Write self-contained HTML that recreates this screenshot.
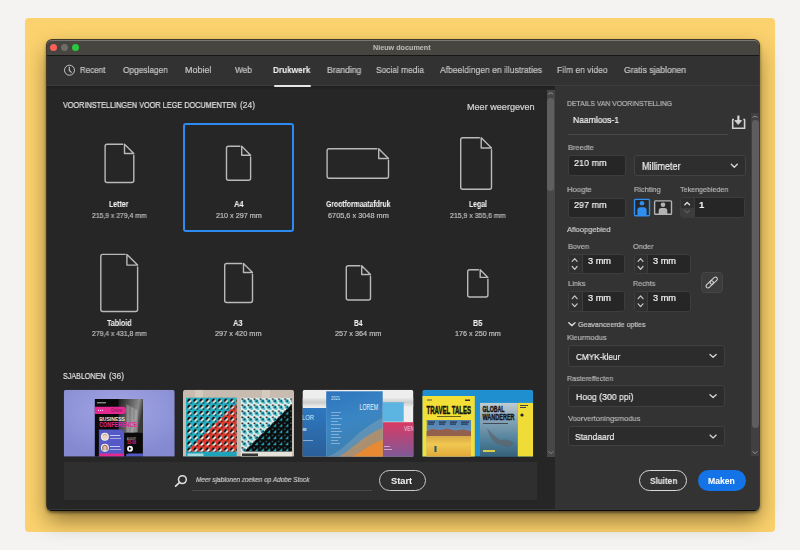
<!DOCTYPE html>
<html><head><meta charset="utf-8"><style>
html,body{margin:0;padding:0;width:800px;height:550px;overflow:hidden;background:#f4f3f1;font-family:'Liberation Sans', sans-serif;}
.a{position:absolute;box-sizing:border-box;}
.t{position:absolute;white-space:pre;line-height:1;transform-origin:0 0;font-family:'Liberation Sans', sans-serif;will-change:transform;}
</style></head><body>
<!-- yellow card -->
<div class="a" style="left:25px;top:18px;width:750px;height:514px;background:#fbd26d;border-radius:4px;"></div>
<!-- window shadow -->
<div class="a" style="left:46px;top:39px;width:714px;height:472px;border-radius:6px;box-shadow:0 2px 3px rgba(0,0,0,0.45), 0 10px 22px -2px rgba(40,25,0,0.55);"></div>
<!-- window -->
<div class="a" style="left:46px;top:39px;width:714px;height:472px;border-radius:6px;overflow:hidden;background:rgba(22,22,24,0.82);">
  <div class="a" style="left:1px;top:1px;width:712px;height:15px;background:#47453f;border-top:1px solid #797773;border-radius:5px 5px 0 0;"></div>
  <div class="a" style="left:1px;top:16px;width:712px;height:1px;background:#161616;"></div>
  <div class="a" style="left:1px;top:17px;width:712px;height:29px;background:#323232;"></div>
  <div class="a" style="left:1px;top:46px;width:712px;height:1px;background:#3c3c3c;"></div>
  <div class="a" style="left:1px;top:47px;width:508px;height:423px;background:#262626;"></div><div class="a" style="left:1px;top:47px;width:508px;height:3px;background:linear-gradient(#1f1f1f,#242424);"></div>
  <div class="a" style="left:509px;top:47px;width:204px;height:423px;background:#333333;"></div>
  <div class="a" style="left:1px;top:470px;width:712px;height:1px;background:#363636;"></div>
  <div class="a" style="left:0;top:471px;width:714px;height:1px;background:#0a0a0a;"></div>
</div>
<!-- traffic lights -->
<div class="a" style="left:50.1px;top:44px;width:7px;height:7px;border-radius:50%;background:#fe5f57;"></div>
<div class="a" style="left:60.9px;top:44px;width:7px;height:7px;border-radius:50%;background:#6e6d6a;"></div>
<div class="a" style="left:71.5px;top:44px;width:7px;height:7px;border-radius:50%;background:#2ac840;"></div>
<!-- clock icon -->
<svg class="a" style="left:60px;top:60px" width="20" height="20" viewBox="0 0 20 20"><circle cx="9.5" cy="10.2" r="5" fill="none" stroke="#c6c6c6" stroke-width="1"/><path d="M9.3 6.8 V10.4 L11.6 12.6" fill="none" stroke="#c6c6c6" stroke-width="1.1"/></svg>
<!-- tab underline -->
<div class="a" style="left:273.75px;top:84.8px;width:36.75px;height:2px;background:#e6e6e6;border-radius:1px;"></div>
<!-- left scrollbar -->
<div class="a" style="left:547px;top:89.5px;width:7.7px;height:367px;background:#474747;"></div>
<div class="a" style="left:547.4px;top:97.5px;width:6.8px;height:93px;background:#5f5f5f;border-radius:3.4px;"></div>
<!-- selection box -->
<div class="a" style="left:183px;top:122.5px;width:111.2px;height:109.5px;border:2px solid #2c8af0;border-radius:3px;"></div>
<!-- doc icons -->
<svg class="a" style="left:0;top:0" width="800" height="550" viewBox="0 0 800 550" id="icons"><path d="M133.80,155.30 L133.80,180.50 Q133.80,182.50 131.80,182.50 L107.10,182.50 Q105.10,182.50 105.10,180.50 L105.10,146.20 Q105.10,144.20 107.10,144.20 L122.70,144.20" fill="none" stroke="#b9b9b9" stroke-width="1.4" stroke-linecap="round"/><path d="M124.50,144.20 L133.80,153.50 L124.50,153.50 Z" fill="none" stroke="#b9b9b9" stroke-width="1.4" stroke-linejoin="round"/><path d="M250.60,157.00 L250.60,178.30 Q250.60,180.30 248.60,180.30 L228.50,180.30 Q226.50,180.30 226.50,178.30 L226.50,148.30 Q226.50,146.30 228.50,146.30 L239.90,146.30" fill="none" stroke="#b9b9b9" stroke-width="1.4" stroke-linecap="round"/><path d="M241.70,146.30 L250.60,155.20 L241.70,155.20 Z" fill="none" stroke="#b9b9b9" stroke-width="1.4" stroke-linejoin="round"/><path d="M388.50,160.30 L388.50,176.30 Q388.50,178.30 386.50,178.30 L329.10,178.30 Q327.10,178.30 327.10,176.30 L327.10,150.70 Q327.10,148.70 329.10,148.70 L376.90,148.70" fill="none" stroke="#b9b9b9" stroke-width="1.4" stroke-linecap="round"/><path d="M378.70,148.70 L388.50,158.50 L378.70,158.50 Z" fill="none" stroke="#b9b9b9" stroke-width="1.4" stroke-linejoin="round"/><path d="M491.50,149.80 L491.50,187.30 Q491.50,189.30 489.50,189.30 L462.70,189.30 Q460.70,189.30 460.70,187.30 L460.70,139.70 Q460.70,137.70 462.70,137.70 L479.40,137.70" fill="none" stroke="#b9b9b9" stroke-width="1.4" stroke-linecap="round"/><path d="M481.20,137.70 L491.50,148.00 L481.20,148.00 Z" fill="none" stroke="#b9b9b9" stroke-width="1.4" stroke-linejoin="round"/><path d="M137.60,266.90 L137.60,309.55 Q137.60,311.55 135.60,311.55 L102.80,311.55 Q100.80,311.55 100.80,309.55 L100.80,256.40 Q100.80,254.40 102.80,254.40 L125.10,254.40" fill="none" stroke="#b9b9b9" stroke-width="1.4" stroke-linecap="round"/><path d="M126.90,254.40 L137.60,265.10 L126.90,265.10 Z" fill="none" stroke="#b9b9b9" stroke-width="1.4" stroke-linejoin="round"/><path d="M252.50,274.30 L252.50,300.50 Q252.50,302.50 250.50,302.50 L226.70,302.50 Q224.70,302.50 224.70,300.50 L224.70,265.50 Q224.70,263.50 226.70,263.50 L241.70,263.50" fill="none" stroke="#b9b9b9" stroke-width="1.4" stroke-linecap="round"/><path d="M243.50,263.50 L252.50,272.50 L243.50,272.50 Z" fill="none" stroke="#b9b9b9" stroke-width="1.4" stroke-linejoin="round"/><path d="M370.50,276.30 L370.50,298.00 Q370.50,300.00 368.50,300.00 L348.30,300.00 Q346.30,300.00 346.30,298.00 L346.30,267.70 Q346.30,265.70 348.30,265.70 L359.90,265.70" fill="none" stroke="#b9b9b9" stroke-width="1.4" stroke-linecap="round"/><path d="M361.70,265.70 L370.50,274.50 L361.70,274.50 Z" fill="none" stroke="#b9b9b9" stroke-width="1.4" stroke-linejoin="round"/><path d="M487.90,279.20 L487.90,295.00 Q487.90,297.00 485.90,297.00 L469.70,297.00 Q467.70,297.00 467.70,295.00 L467.70,271.70 Q467.70,269.70 469.70,269.70 L478.40,269.70" fill="none" stroke="#b9b9b9" stroke-width="1.4" stroke-linecap="round"/><path d="M480.20,269.70 L487.90,277.40 L480.20,277.40 Z" fill="none" stroke="#b9b9b9" stroke-width="1.4" stroke-linejoin="round"/></svg>
<svg class="a" style="left:0;top:0" width="800" height="550" viewBox="0 0 800 550"><defs>
<clipPath id="c1"><path d="M63.75,456.4 V392.3 Q63.75,389.8 66.25,389.8 H172.2 Q174.7,389.8 174.7,392.3 V456.4 Z"/></clipPath>
<clipPath id="c2"><path d="M183,456.4 V392.3 Q183,389.8 185.5,389.8 H291.5 Q294,389.8 294,392.3 V456.4 Z"/></clipPath>
<clipPath id="c3"><path d="M302.5,456.4 V392.3 Q302.5,389.8 305,389.8 H410.9 Q413.4,389.8 413.4,392.3 V456.4 Z"/></clipPath>
<clipPath id="c4"><path d="M422.3,456.4 V392.3 Q422.3,389.8 424.8,389.8 H530.7 Q533.2,389.8 533.2,392.3 V456.4 Z"/></clipPath>
<radialGradient id="g1" cx="0.5" cy="0.3" r="0.7"><stop offset="0" stop-color="#a3a7e6"/><stop offset="1" stop-color="#8489d0"/></radialGradient>
<linearGradient id="bld" x1="0" y1="0" x2="1" y2="0.3"><stop offset="0" stop-color="#1e1e1e"/><stop offset="0.45" stop-color="#5a5a5a"/><stop offset="0.8" stop-color="#8a8a8a"/><stop offset="1" stop-color="#3a3a3a"/></linearGradient>
<pattern id="pt1" width="6.1" height="6.1" patternUnits="userSpaceOnUse" x="186.3" y="397.9"><rect width="6.1" height="6.1" fill="#22b2c6"/><circle cx="3" cy="3" r="2.1" fill="#f2f2ee"/><path d="M1.5,4.5 A2.1,2.1 0 0 1 4.5,1.5 Z" fill="#0c0c0c"/><path d="M3.4,5.6 L5.6,3.4 L5.6,5.6Z" fill="#0c0c0c"/></pattern>
<pattern id="pt2" width="6.1" height="6.1" patternUnits="userSpaceOnUse" x="186.3" y="397.9"><rect width="6.1" height="6.1" fill="#e8392c"/><circle cx="3" cy="3" r="2.1" fill="#f2f2ee"/><path d="M1.5,4.5 A2.1,2.1 0 0 1 4.5,1.5 Z" fill="#0c0c0c"/><path d="M3.4,5.6 L5.6,3.4 L5.6,5.6Z" fill="#0c0c0c"/></pattern>
<pattern id="pt3" width="6.1" height="6.1" patternUnits="userSpaceOnUse" x="241.1" y="397.9"><rect width="6.1" height="6.1" fill="#e9f0ec"/><rect x="0.4" y="0.4" width="1.7" height="1.5" fill="#111"/><circle cx="3.1" cy="3.1" r="1.9" fill="#1fa9be"/><path d="M2.2,4 L4,2.2 L4.6,3.6Z" fill="#111"/><path d="M3.2,5.8 L5.8,3.2 L5.8,5.8Z" fill="#22b0c4"/></pattern>
<pattern id="pt4" width="6.1" height="6.1" patternUnits="userSpaceOnUse" x="241.1" y="397.9"><rect width="6.1" height="6.1" fill="#0b0b0b"/><path d="M1.4,4.6 L4.6,1.4 L4.6,4.6Z" fill="#1fa9be"/><rect x="0.3" y="0.3" width="1.3" height="1.3" fill="#3a8a96"/></pattern>
<linearGradient id="bl3" x1="0" y1="0" x2="0.3" y2="1"><stop offset="0" stop-color="#2f74bd"/><stop offset="0.5" stop-color="#3a86c4"/><stop offset="1" stop-color="#3f7fae"/></linearGradient>
<linearGradient id="or3" x1="0" y1="0" x2="1" y2="0"><stop offset="0" stop-color="#e8842a" stop-opacity="0"/><stop offset="1" stop-color="#e8842a"/></linearGradient>
<linearGradient id="pk3" x1="0" y1="0" x2="0" y2="1"><stop offset="0" stop-color="#d83a63"/><stop offset="1" stop-color="#7d5a9a"/></linearGradient>
<linearGradient id="sky4" x1="0" y1="0" x2="0" y2="1"><stop offset="0" stop-color="#4f7fb0"/><stop offset="1" stop-color="#8ab0cc"/></linearGradient>
<linearGradient id="des4" x1="0" y1="0" x2="0" y2="1"><stop offset="0" stop-color="#d8a848"/><stop offset="0.4" stop-color="#f0c850"/><stop offset="1" stop-color="#e0a838"/></linearGradient>
<linearGradient id="sea4" x1="0" y1="0" x2="0" y2="1"><stop offset="0" stop-color="#c0ccd2"/><stop offset="0.3" stop-color="#8aa6b8"/><stop offset="0.7" stop-color="#4f7f9a"/><stop offset="1" stop-color="#35607a"/></linearGradient>
<linearGradient id="gr3" x1="0" y1="0" x2="0" y2="1"><stop offset="0" stop-color="#e8e8e8"/><stop offset="0.5" stop-color="#cdcdcd"/><stop offset="1" stop-color="#ececec"/></linearGradient><linearGradient id="bl3b" x1="0" y1="0" x2="0" y2="1"><stop offset="0" stop-color="#2e78bf"/><stop offset="1" stop-color="#2a5f9a"/></linearGradient></defs><g clip-path="url(#c1)"><rect x="63.75" y="389.8" width="111" height="67" fill="url(#g1)"/><rect x="94.8" y="399" width="48.1" height="58" fill="#0a0a0a"/><rect x="118.6" y="399" width="24.3" height="33.8" fill="url(#bld)"/><path d="M126,404 L138,410 L138,432 L126,432Z" fill="#b0b0b0" opacity="0.35"/><path d="M128,406 V432 M132,408 V432 M136,410 V432" stroke="#d8d8d8" stroke-width="0.6" opacity="0.6"/><rect x="97" y="402.3" width="9" height="1" fill="#bbb"/><path d="M94.8,406.8 H123 Q126.1,406.8 126.1,410.3 Q126.1,413.9 123,413.9 H94.8Z" fill="#e42a92"/><rect x="98" y="409.8" width="1" height="1" fill="#fff"/><rect x="100" y="409.8" width="1" height="1" fill="#fff"/><rect x="102" y="409.8" width="1" height="1" fill="#fff"/><text x="111" y="412.4" font-family="Liberation Sans" font-size="5" textLength="11" lengthAdjust="spacingAndGlyphs" fill="#7a1048">Online</text><text x="99.2" y="420.9" font-family="Liberation Sans" font-weight="700" font-size="5.6" textLength="25.8" lengthAdjust="spacingAndGlyphs" fill="#ececec">BUSINESS</text><text x="99.2" y="427.4" font-family="Liberation Sans" font-weight="700" font-size="6.4" textLength="37.8" lengthAdjust="spacingAndGlyphs" fill="#e0289a">CONFERENCE</text><path d="M98.9,456.4 V429.4 H120 Q124.1,429.4 124.1,433.5 V456.4Z" fill="#5459c6"/><circle cx="104.9" cy="436.8" r="4" fill="#f2ede8"/><circle cx="104.9" cy="436.8" r="2.9" fill="#e8d4c4"/><path d="M102.6,435.5 Q104.9,432.8 107.2,435.5" stroke="#c8a080" stroke-width="1" fill="none"/><circle cx="104.9" cy="447.7" r="4" fill="#f2ede8"/><circle cx="104.9" cy="447.7" r="2.9" fill="#d8c0ac"/><path d="M102.8,450.5 V446.5 Q104.9,443.6 107,446.5 V450.5" stroke="#8a6040" stroke-width="0.9" fill="none"/><rect x="110" y="435" width="10" height="1" fill="#c8c8f0"/><rect x="110" y="438" width="11" height="1" fill="#a8a8e0"/><rect x="110" y="446" width="10" height="1" fill="#c8c8f0"/><rect x="110" y="449" width="11" height="1" fill="#a8a8e0"/><rect x="98.9" y="453.6" width="25.2" height="3" fill="#e42a92"/><text x="127" y="439.8" font-family="Liberation Sans" font-size="2.8" textLength="9" lengthAdjust="spacingAndGlyphs" fill="#ddd">AUGUST</text><text x="127" y="444.2" font-family="Liberation Sans" font-weight="700" font-size="4.8" textLength="9" lengthAdjust="spacingAndGlyphs" fill="#e42a92">15-16</text><circle cx="130" cy="448.8" r="3" fill="#f0f0f0"/><path d="M129,447.3 L131.5,448.8 L129,450.3Z" fill="#111"/><path d="M126,456.4 V455.6 Q126,453.6 128,453.6 H142.9 V456.4Z" fill="#5459c6"/></g><g clip-path="url(#c2)"><rect x="183" y="389.8" width="111" height="67" fill="#c8bcb0"/><rect x="195" y="389.8" width="8" height="8" fill="#ddd3c8" opacity="0.6"/><rect x="262" y="389.8" width="8" height="8" fill="#ddd3c8" opacity="0.6"/><rect x="186" y="397.7" width="50.7" height="54" fill="url(#pt1)"/><path d="M236.7,403.5 L236.7,451.7 L186,451.7 Z" fill="url(#pt2)"/><rect x="186" y="451.7" width="50.7" height="5" fill="#1fa3bb"/><rect x="240.7" y="397.7" width="51.3" height="54" fill="url(#pt3)"/><path d="M292,404 L292,451.7 L244,451.7 Z" fill="url(#pt4)"/><rect x="240.7" y="451.7" width="51.3" height="5" fill="#e6e3da"/><rect x="242" y="453.5" width="16" height="2.5" fill="#333"/><rect x="187.5" y="453.5" width="16" height="2.5" fill="#e0f0f0" opacity="0.7"/></g><g clip-path="url(#c3)"><rect x="302.5" y="389.8" width="111" height="67" fill="#eeeeee"/><rect x="302.5" y="398" width="111" height="9" fill="url(#gr3)"/><rect x="302.5" y="408" width="24" height="49" fill="url(#bl3b)"/><text x="302" y="420" font-family="Liberation Sans" font-size="7" textLength="12" lengthAdjust="spacingAndGlyphs" fill="#d8e6f4">LOR</text><rect x="302.5" y="428" width="4" height="3" fill="#cfe0f0" opacity="0.7"/><rect x="303" y="440" width="10" height="1" fill="#cfe0f0" opacity="0.6"/><rect x="382.7" y="402.2" width="21" height="19.5" fill="#5cb4e0"/><rect x="382.7" y="422.2" width="31" height="35" fill="url(#pk3)"/><text x="404" y="430.5" font-family="Liberation Sans" font-size="7" textLength="10" lengthAdjust="spacingAndGlyphs" fill="#f4d8e4">VEN</text><rect x="384" y="446" width="6" height="1" fill="#e8d0e0" opacity="0.7"/><rect x="384" y="449" width="8" height="1" fill="#e8d0e0" opacity="0.7"/><rect x="326.2" y="391.3" width="56.5" height="66" fill="url(#bl3)"/><path d="M326.2,457 C345,452 355,430 382.7,418 L382.7,457Z" fill="#9db0b8" opacity="0.35"/><path d="M338,457 C352,450 362,436 382.7,428 L382.7,457Z" fill="#e8903a" opacity="0.55"/><path d="M352,457 C362,452 370,444 382.7,440 L382.7,457Z" fill="#ee8a2a" opacity="0.9"/><text x="331" y="400" font-family="Liberation Sans" font-size="5.5" textLength="9" lengthAdjust="spacingAndGlyphs" fill="#dbe8f6">2021</text><text x="359.5" y="409.5" font-family="Liberation Sans" font-size="9" textLength="18.5" lengthAdjust="spacingAndGlyphs" fill="#e8f0f8">LOREM</text><g fill="#d0e0f0" opacity="0.55"><rect x="331" y="412" width="10" height="0.9"/><rect x="331" y="415" width="8" height="0.9"/><rect x="331" y="418" width="11" height="0.9"/><rect x="331" y="421" width="7" height="0.9"/><rect x="331" y="424" width="10" height="0.9"/><rect x="331" y="428" width="9" height="0.9"/><rect x="331" y="431" width="11" height="0.9"/><rect x="331" y="434" width="8" height="0.9"/><rect x="331" y="437" width="10" height="0.9"/><rect x="331" y="440" width="7" height="0.9"/><rect x="331" y="443" width="9" height="0.9"/></g></g><g clip-path="url(#c4)"><rect x="422.3" y="389.8" width="111" height="67" fill="#1f8fd0"/><rect x="422.3" y="396" width="52.5" height="61" fill="#f3df36"/><rect x="427" y="399.5" width="5" height="1" fill="#555"/><rect x="465" y="399.5" width="5" height="1.5" fill="#333"/><text x="426.6" y="413.6" font-family="Liberation Sans" font-weight="700" font-size="11" textLength="44.4" lengthAdjust="spacingAndGlyphs" fill="#141414" stroke="#141414" stroke-width="0.5">TRAVEL TALES</text><rect x="437" y="416" width="24" height="1" fill="#6a6020"/><rect x="426.7" y="420" width="44.3" height="37" fill="url(#sky4)"/><g fill="#1a2030" opacity="0.8"><rect x="428" y="421.5" width="7" height="1.2"/><rect x="428" y="423.5" width="6" height="1.2"/><rect x="439" y="421.5" width="7" height="1.2"/><rect x="439" y="423.5" width="6" height="1.2"/><rect x="450" y="421.5" width="7" height="1.2"/><rect x="450" y="423.5" width="6" height="1.2"/><rect x="461" y="421.5" width="8" height="1.2"/><rect x="461" y="423.5" width="7" height="1.2"/></g><path d="M426.7,431 L432,429 L440,430 L447,428.5 L455,430.5 L463,429.5 L471,431 L471,437 L426.7,437Z" fill="#94604e"/><rect x="426.7" y="436" width="44.3" height="21" fill="url(#des4)"/><rect x="434.5" y="446" width="2" height="6" fill="#1d5a70"/><rect x="480" y="402.9" width="37.8" height="54" fill="url(#sea4)"/><text x="482.5" y="411.8" font-family="Liberation Sans" font-weight="700" font-size="8.5" textLength="22" lengthAdjust="spacingAndGlyphs" fill="#141414" stroke="#141414" stroke-width="0.4">GLOBAL</text><text x="482.5" y="420.3" font-family="Liberation Sans" font-weight="700" font-size="8.5" textLength="32" lengthAdjust="spacingAndGlyphs" fill="#141414" stroke="#141414" stroke-width="0.4">WANDERER</text><rect x="483" y="423" width="25" height="0.8" fill="#334"/><path d="M487,428 Q494,436 500,440 Q508,438 514,443 L510,447 Q500,446 494,442 Q489,436 487,428Z" fill="#5e6468" opacity="0.7"/><rect x="483" y="450" width="12" height="2" fill="#e8d840" opacity="0.9"/><rect x="517.8" y="402.9" width="15.4" height="54" fill="#f0dc36"/><rect x="520" y="405" width="8" height="1" fill="#444"/><rect x="520" y="407" width="6" height="1" fill="#444"/><circle cx="522" cy="415" r="1.6" fill="#222"/></g></svg>
<!-- search bar -->
<div class="a" style="left:64px;top:461.5px;width:473.3px;height:38.2px;background:#2f2f2f;"></div>
<div class="a" style="left:192.2px;top:489.5px;width:179.5px;height:1px;background:#4a4a4a;"></div>
<div class="a" style="left:378.75px;top:470px;width:47.25px;height:21px;border:1.6px solid #c8c8c8;border-radius:11px;"></div>
<!-- right panel -->
<div class="a" style="left:568.2px;top:134px;width:159.4px;height:1px;background:#474747;"></div>
<div class="a" style="left:568.2px;top:155.4px;width:57.6px;height:21.1px;background:#262626;border:1px solid #3d3d3d;border-radius:3px;"></div>
<div class="a" style="left:633.9px;top:155.4px;width:111.7px;height:21.1px;background:#2e2e2e;border:1px solid #424242;border-radius:3px;"></div>
<div class="a" style="left:568.2px;top:197.5px;width:57.6px;height:20px;background:#262626;border:1px solid #3d3d3d;border-radius:3px;"></div>
<!-- right scrollbar -->
<div class="a" style="left:751px;top:112.6px;width:8.2px;height:343.6px;background:#404040;"></div>
<div class="a" style="left:751.8px;top:120.3px;width:6.8px;height:307.3px;background:#5d5d5d;border-radius:3.4px;"></div>
<!-- buttons -->
<div class="a" style="left:639.3px;top:470.3px;width:47.9px;height:20.6px;border:1.8px solid #d8d8d8;border-radius:11px;"></div>
<div class="a" style="left:697.9px;top:470.3px;width:47.8px;height:20.6px;background:#1473e6;border-radius:11px;"></div>

<!-- artboards stepper -->
<div class="a" style="left:680.3px;top:197.4px;width:65.2px;height:20.2px;background:#262626;border:1px solid #3d3d3d;border-radius:3px;overflow:hidden;">
  <div class="a" style="left:0;top:0;width:13px;height:10px;background:#2f2f2f;"></div>
  <div class="a" style="left:0;top:10px;width:13px;height:10px;background:#3d3d3d;"></div>
  <div class="a" style="left:12.6px;top:0;width:1px;height:20px;background:#3d3d3d;"></div>
</div>
<!-- bleed inputs -->
<div class="a" style="left:568px;top:253.6px;width:57.4px;height:20.8px;background:#262626;border:1px solid #3d3d3d;border-radius:3px;overflow:hidden;"><div class="a" style="left:0;top:0;width:12.6px;height:21px;background:#2f2f2f;"></div><div class="a" style="left:12.6px;top:0;width:1px;height:21px;background:#3d3d3d;"></div></div>
<div class="a" style="left:633.9px;top:253.6px;width:57.4px;height:20.8px;background:#262626;border:1px solid #3d3d3d;border-radius:3px;overflow:hidden;"><div class="a" style="left:0;top:0;width:12.6px;height:21px;background:#2f2f2f;"></div><div class="a" style="left:12.6px;top:0;width:1px;height:21px;background:#3d3d3d;"></div></div>
<div class="a" style="left:568px;top:290.9px;width:57.4px;height:20.8px;background:#262626;border:1px solid #3d3d3d;border-radius:3px;overflow:hidden;"><div class="a" style="left:0;top:0;width:12.6px;height:21px;background:#2f2f2f;"></div><div class="a" style="left:12.6px;top:0;width:1px;height:21px;background:#3d3d3d;"></div></div>
<div class="a" style="left:633.9px;top:290.9px;width:57.4px;height:20.8px;background:#262626;border:1px solid #3d3d3d;border-radius:3px;overflow:hidden;"><div class="a" style="left:0;top:0;width:12.6px;height:21px;background:#2f2f2f;"></div><div class="a" style="left:12.6px;top:0;width:1px;height:21px;background:#3d3d3d;"></div></div>
<!-- link button -->
<div class="a" style="left:701px;top:272px;width:22px;height:21.3px;background:#3c3c3c;border:1px solid #464646;border-radius:3.5px;"></div>
<!-- dropdowns -->
<div class="a" style="left:567.9px;top:345.2px;width:156.8px;height:21.5px;background:#2c2c2c;border:1px solid #404040;border-radius:3px;"></div>
<div class="a" style="left:567.9px;top:385.3px;width:156.8px;height:21.4px;background:#2c2c2c;border:1px solid #404040;border-radius:3px;"></div>
<div class="a" style="left:567.9px;top:426.1px;width:156.8px;height:20.4px;background:#2c2c2c;border:1px solid #404040;border-radius:3px;"></div>
<!-- misc svg icons -->
<svg class="a" style="left:0;top:0" width="800" height="550" viewBox="0 0 800 550">
 <g fill="none" stroke-linecap="round" stroke-linejoin="round">
  <!-- millimeter chevron -->
  <path d="M731.3,164.3 L734.3,167.3 L737.3,164.3" stroke="#d8d8d8" stroke-width="1.35"/>
  <!-- dropdown chevrons -->
  <path d="M710,354.5 L713.1,357.3 L716.2,354.5" stroke="#d6d6d6" stroke-width="1.3"/>
  <path d="M710,394.8 L713.1,397.6 L716.2,394.8" stroke="#d6d6d6" stroke-width="1.3"/>
  <path d="M710,435.1 L713.1,437.9 L716.2,435.1" stroke="#d6d6d6" stroke-width="1.3"/>
  <!-- geavanceerde chevron -->
  <path d="M568.8,322.7 L571.9,325.6 L575,322.7" stroke="#d6d6d6" stroke-width="1.45"/>
  <!-- artboard stepper chevrons -->
  <path d="M684.8,204.8 L687.1,202.5 L689.6,204.8" stroke="#e0e0e0" stroke-width="1.3"/>
  <path d="M684.8,210.4 L687.1,212.8 L689.6,210.4" stroke="#5f5f5f" stroke-width="1.1"/>
  <!-- bleed stepper chevrons -->
  <path d="M572.2,261.4 L574.7,258.6 L577.1,261.4" stroke="#c8c8c8" stroke-width="1.2"/>
  <path d="M572.2,266.5 L574.7,269.3 L577.1,266.5" stroke="#c8c8c8" stroke-width="1.2"/>
  <path d="M638.1,261.4 L640.6,258.6 L643,261.4" stroke="#c8c8c8" stroke-width="1.2"/>
  <path d="M638.1,266.5 L640.6,269.3 L643,266.5" stroke="#c8c8c8" stroke-width="1.2"/>
  <path d="M572.2,298.7 L574.7,295.9 L577.1,298.7" stroke="#c8c8c8" stroke-width="1.2"/>
  <path d="M572.2,303.8 L574.7,306.6 L577.1,303.8" stroke="#c8c8c8" stroke-width="1.2"/>
  <path d="M638.1,298.7 L640.6,295.9 L643,298.7" stroke="#c8c8c8" stroke-width="1.2"/>
  <path d="M638.1,303.8 L640.6,306.6 L643,303.8" stroke="#c8c8c8" stroke-width="1.2"/>
  <!-- save icon -->
  <path d="M732.7,119.4 V128.2 H744.6 V119.4" stroke="#d2d2d2" stroke-width="1.6" stroke-linecap="butt" stroke-linejoin="miter"/>
  <path d="M732.2,119.4 H734 M745.1,119.4 H743.3" stroke="#d2d2d2" stroke-width="1.4" stroke-linecap="butt"/>
  <path d="M738.4,115.6 V121" stroke="#d6d6d6" stroke-width="2.2" stroke-linecap="butt"/>
  <path d="M735.2,120.6 H741.6 L738.4,124.2 Z" fill="#d6d6d6" stroke="#d6d6d6" stroke-width="0.9" stroke-linejoin="round"/>
  <!-- link icon -->
  <g transform="translate(711.7,282.5) rotate(-43)">
   <rect x="-7" y="-1.9" width="8.6" height="3.8" rx="1.9" stroke="#d4d4d4" stroke-width="1.05"/>
   <rect x="-1.6" y="-1.9" width="8.6" height="3.8" rx="1.9" stroke="#d4d4d4" stroke-width="1.05"/>
  </g>
  <!-- scrollbar chevrons -->
  <path d="M548.5,93.8 Q550.6,91.2 552.7,93.8" stroke="#9a9a9a" stroke-width="0.9"/>
  <path d="M548.6,451.6 L550.9,453.6 L553.2,451.6" stroke="#8a8a8a" stroke-width="0.9"/>
  <path d="M752.8,117.1 Q755,114.8 757.2,117.1" stroke="#a0a0a0" stroke-width="0.85"/>
  <path d="M752.8,451.6 L755,453.6 L757.2,451.6" stroke="#9a9a9a" stroke-width="0.9"/>
  <!-- search icon -->
  <circle cx="182.4" cy="479.6" r="3.9" stroke="#e0e0e0" stroke-width="1.5"/>
  <path d="M179.6,482.4 L175.6,486.2" stroke="#e0e0e0" stroke-width="1.7"/>
 </g>
 <!-- orientation icons -->
 <rect x="634.5" y="199.4" width="15" height="16.4" fill="#282828" stroke="#2e8ff0" stroke-width="1.4" rx="1"/>
 <circle cx="642" cy="203.3" r="2.3" fill="#2e8ff0"/>
 <path d="M637.4,215.8 V210.2 Q637.4,207.3 640.3,207.3 H643.7 Q646.6,207.3 646.6,210.2 V215.8Z" fill="#2e8ff0"/>
 <rect x="654.6" y="200.9" width="16.9" height="13.4" fill="#282828" stroke="#b4b4b4" stroke-width="1.4" rx="0.8"/>
 <circle cx="663" cy="204.8" r="2.3" fill="#b4b4b4"/>
 <path d="M658.7,214.3 V210.7 Q658.7,208 661.4,208 H664.6 Q667.3,208 667.3,210.7 V214.3Z" fill="#b4b4b4"/>
</svg>

<div class="t" style="left:373.13px;top:44.00px;font-size:7.0px;font-weight:700;color:#bdbcb8;transform:scaleX(1.0288);-webkit-text-stroke:0.05px #bdbcb8;">Nieuw document</div>
<div class="t" style="left:80.42px;top:66.00px;font-size:9px;font-weight:400;color:#c6c6c6;transform:scaleX(0.8875);-webkit-text-stroke:0.2px #c6c6c6;">Recent</div>
<div class="t" style="left:123.48px;top:66.00px;font-size:9px;font-weight:400;color:#c6c6c6;transform:scaleX(0.9248);-webkit-text-stroke:0.2px #c6c6c6;">Opgeslagen</div>
<div class="t" style="left:185.05px;top:66.00px;font-size:9px;font-weight:400;color:#c6c6c6;transform:scaleX(0.9947);-webkit-text-stroke:0.2px #c6c6c6;">Mobiel</div>
<div class="t" style="left:234.81px;top:66.00px;font-size:9px;font-weight:400;color:#c6c6c6;transform:scaleX(0.9243);-webkit-text-stroke:0.2px #c6c6c6;">Web</div>
<div class="t" style="left:272.80px;top:66.00px;font-size:9px;font-weight:700;color:#f2f2f2;transform:scaleX(0.9110);-webkit-text-stroke:0.05px #f2f2f2;">Drukwerk</div>
<div class="t" style="left:326.53px;top:66.00px;font-size:9px;font-weight:400;color:#c6c6c6;transform:scaleX(0.9508);-webkit-text-stroke:0.2px #c6c6c6;">Branding</div>
<div class="t" style="left:375.70px;top:66.00px;font-size:9px;font-weight:400;color:#c6c6c6;transform:scaleX(0.9297);-webkit-text-stroke:0.2px #c6c6c6;">Social media</div>
<div class="t" style="left:439.70px;top:66.00px;font-size:9px;font-weight:400;color:#c6c6c6;transform:scaleX(0.9487);-webkit-text-stroke:0.2px #c6c6c6;">Afbeeldingen en illustraties</div>
<div class="t" style="left:557.48px;top:66.00px;font-size:9px;font-weight:400;color:#c6c6c6;transform:scaleX(0.9454);-webkit-text-stroke:0.2px #c6c6c6;">Film en video</div>
<div class="t" style="left:623.68px;top:66.00px;font-size:9px;font-weight:400;color:#c6c6c6;transform:scaleX(0.9542);-webkit-text-stroke:0.2px #c6c6c6;">Gratis sjablonen</div>
<div class="t" style="left:63.02px;top:101.00px;font-size:8.4px;font-weight:400;color:#e2e2e2;transform:scaleX(0.8712);-webkit-text-stroke:0.2px #e2e2e2;">VOORINSTELLINGEN VOOR LEGE DOCUMENTEN</div>
<div class="t" style="left:239.59px;top:101.00px;font-size:8.4px;font-weight:400;color:#d4d4d4;transform:scaleX(1.0022);-webkit-text-stroke:0.2px #d4d4d4;">(24)</div>
<div class="t" style="left:467.21px;top:103.00px;font-size:8.6px;font-weight:400;color:#d2d2d2;transform:scaleX(1.0572);-webkit-text-stroke:0.2px #d2d2d2;">Meer weergeven</div>
<div class="t" style="left:109.32px;top:200.00px;font-size:8.4px;font-weight:700;color:#f0f0f0;transform:scaleX(0.8340);-webkit-text-stroke:0.05px #f0f0f0;">Letter</div>
<div class="t" style="left:91.88px;top:212.00px;font-size:7.0px;font-weight:400;color:#bdbdbd;transform:scaleX(0.9738);-webkit-text-stroke:0.2px #bdbdbd;">215,9 x 279,4 mm</div>
<div class="t" style="left:233.89px;top:200.00px;font-size:8.4px;font-weight:700;color:#f0f0f0;transform:scaleX(0.9039);-webkit-text-stroke:0.05px #f0f0f0;">A4</div>
<div class="t" style="left:215.50px;top:212.00px;font-size:7.0px;font-weight:400;color:#bdbdbd;transform:scaleX(1.0345);-webkit-text-stroke:0.2px #bdbdbd;">210 x 297 mm</div>
<div class="t" style="left:326.04px;top:200.00px;font-size:8.4px;font-weight:700;color:#f0f0f0;transform:scaleX(0.8142);-webkit-text-stroke:0.05px #f0f0f0;">Grootformaatafdruk</div>
<div class="t" style="left:327.76px;top:212.00px;font-size:7.0px;font-weight:400;color:#bdbdbd;transform:scaleX(1.0481);-webkit-text-stroke:0.2px #bdbdbd;">6705,6 x 3048 mm</div>
<div class="t" style="left:468.60px;top:200.00px;font-size:8.4px;font-weight:700;color:#f0f0f0;transform:scaleX(0.8191);-webkit-text-stroke:0.05px #f0f0f0;">Legal</div>
<div class="t" style="left:449.93px;top:212.00px;font-size:7.0px;font-weight:400;color:#bdbdbd;transform:scaleX(0.9916);-webkit-text-stroke:0.2px #bdbdbd;">215,9 x 355,6 mm</div>
<div class="t" style="left:106.54px;top:319.00px;font-size:8.4px;font-weight:700;color:#f0f0f0;transform:scaleX(0.8426);-webkit-text-stroke:0.05px #f0f0f0;">Tabloid</div>
<div class="t" style="left:91.88px;top:330.00px;font-size:7.0px;font-weight:400;color:#bdbdbd;transform:scaleX(0.9738);-webkit-text-stroke:0.2px #bdbdbd;">279,4 x 431,8 mm</div>
<div class="t" style="left:233.28px;top:319.00px;font-size:8.4px;font-weight:700;color:#f0f0f0;transform:scaleX(0.8976);-webkit-text-stroke:0.05px #f0f0f0;">A3</div>
<div class="t" style="left:215.07px;top:330.00px;font-size:7.0px;font-weight:400;color:#bdbdbd;transform:scaleX(1.0497);-webkit-text-stroke:0.2px #bdbdbd;">297 x 420 mm</div>
<div class="t" style="left:353.70px;top:319.00px;font-size:8.4px;font-weight:700;color:#f0f0f0;transform:scaleX(0.7992);-webkit-text-stroke:0.05px #f0f0f0;">B4</div>
<div class="t" style="left:334.52px;top:330.00px;font-size:7.0px;font-weight:400;color:#bdbdbd;transform:scaleX(1.0468);-webkit-text-stroke:0.2px #bdbdbd;">257 x 364 mm</div>
<div class="t" style="left:472.65px;top:319.00px;font-size:8.4px;font-weight:700;color:#f0f0f0;transform:scaleX(0.8727);-webkit-text-stroke:0.05px #f0f0f0;">B5</div>
<div class="t" style="left:454.72px;top:330.00px;font-size:7.0px;font-weight:400;color:#bdbdbd;transform:scaleX(1.0325);-webkit-text-stroke:0.2px #bdbdbd;">176 x 250 mm</div>
<div class="t" style="left:63.25px;top:372.00px;font-size:8.4px;font-weight:400;color:#e2e2e2;transform:scaleX(0.8546);-webkit-text-stroke:0.2px #e2e2e2;">SJABLONEN</div>
<div class="t" style="left:108.53px;top:372.00px;font-size:8.4px;font-weight:400;color:#d4d4d4;transform:scaleX(1.0181);-webkit-text-stroke:0.2px #d4d4d4;">(36)</div>
<div class="t" style="left:195.62px;top:476.00px;font-size:7.2px;font-weight:400;color:#c8c8c8;transform:scaleX(0.8942);-webkit-text-stroke:0.2px #c8c8c8;font-style:italic;">Meer sjablonen zoeken op Adobe Stock</div>
<div class="t" style="left:391.33px;top:477.00px;font-size:8.6px;font-weight:700;color:#f0f0f0;transform:scaleX(1.0816);-webkit-text-stroke:0.05px #f0f0f0;">Start</div>
<div class="t" style="left:567.00px;top:100.00px;font-size:8px;font-weight:400;color:#b8b8b8;transform:scaleX(0.8521);-webkit-text-stroke:0.2px #b8b8b8;">DETAILS VAN VOORINSTELLING</div>
<div class="t" style="left:572.57px;top:116.00px;font-size:9px;font-weight:400;color:#f2f2f2;transform:scaleX(0.9490);-webkit-text-stroke:0.2px #f2f2f2;">Naamloos-1</div>
<div class="t" style="left:567.55px;top:144.00px;font-size:8px;font-weight:400;color:#b4b4b4;transform:scaleX(0.9226);-webkit-text-stroke:0.2px #b4b4b4;">Breedte</div>
<div class="t" style="left:574.26px;top:158.00px;font-size:9.6px;font-weight:400;color:#f2f2f2;transform:scaleX(0.9386);-webkit-text-stroke:0.2px #f2f2f2;">210 mm</div>
<div class="t" style="left:641.67px;top:162.00px;font-size:10px;font-weight:400;color:#f2f2f2;transform:scaleX(0.8983);-webkit-text-stroke:0.2px #f2f2f2;">Millimeter</div>
<div class="t" style="left:566.85px;top:186.00px;font-size:8px;font-weight:400;color:#b4b4b4;transform:scaleX(0.9631);-webkit-text-stroke:0.2px #b4b4b4;">Hoogte</div>
<div class="t" style="left:633.64px;top:186.00px;font-size:8px;font-weight:400;color:#b4b4b4;transform:scaleX(0.9218);-webkit-text-stroke:0.2px #b4b4b4;">Richting</div>
<div class="t" style="left:679.53px;top:186.00px;font-size:8px;font-weight:400;color:#b4b4b4;transform:scaleX(0.8925);-webkit-text-stroke:0.2px #b4b4b4;">Tekengebieden</div>
<div class="t" style="left:574.26px;top:200.00px;font-size:9.6px;font-weight:400;color:#f2f2f2;transform:scaleX(0.9386);-webkit-text-stroke:0.2px #f2f2f2;">297 mm</div>
<div class="t" style="left:699.40px;top:200.00px;font-size:9.6px;font-weight:700;color:#f2f2f2;transform:scaleX(0.9963);-webkit-text-stroke:0.05px #f2f2f2;">1</div>
<div class="t" style="left:567.40px;top:226.00px;font-size:8px;font-weight:400;color:#d0d0d0;transform:scaleX(0.9324);-webkit-text-stroke:0.2px #d0d0d0;">Afloopgebied</div>
<div class="t" style="left:567.90px;top:243.00px;font-size:8px;font-weight:400;color:#b4b4b4;transform:scaleX(0.9289);-webkit-text-stroke:0.2px #b4b4b4;">Boven</div>
<div class="t" style="left:633.43px;top:243.00px;font-size:8px;font-weight:400;color:#b4b4b4;transform:scaleX(0.9243);-webkit-text-stroke:0.2px #b4b4b4;">Onder</div>
<div class="t" style="left:587.57px;top:257.00px;font-size:8.6px;font-weight:400;color:#f2f2f2;transform:scaleX(1.0699);-webkit-text-stroke:0.2px #f2f2f2;">3 mm</div>
<div class="t" style="left:653.22px;top:257.00px;font-size:8.6px;font-weight:400;color:#f2f2f2;transform:scaleX(1.0699);-webkit-text-stroke:0.2px #f2f2f2;">3 mm</div>
<div class="t" style="left:567.93px;top:280.00px;font-size:8px;font-weight:400;color:#b4b4b4;transform:scaleX(0.9361);-webkit-text-stroke:0.2px #b4b4b4;">Links</div>
<div class="t" style="left:632.99px;top:280.00px;font-size:8px;font-weight:400;color:#b4b4b4;transform:scaleX(0.8941);-webkit-text-stroke:0.2px #b4b4b4;">Rechts</div>
<div class="t" style="left:587.57px;top:294.00px;font-size:8.6px;font-weight:400;color:#f2f2f2;transform:scaleX(1.0699);-webkit-text-stroke:0.2px #f2f2f2;">3 mm</div>
<div class="t" style="left:653.22px;top:294.00px;font-size:8.6px;font-weight:400;color:#f2f2f2;transform:scaleX(1.0699);-webkit-text-stroke:0.2px #f2f2f2;">3 mm</div>
<div class="t" style="left:578.02px;top:321.00px;font-size:8px;font-weight:400;color:#cacaca;transform:scaleX(0.8885);-webkit-text-stroke:0.2px #cacaca;">Geavanceerde opties</div>
<div class="t" style="left:567.24px;top:334.00px;font-size:8px;font-weight:400;color:#b4b4b4;transform:scaleX(0.9276);-webkit-text-stroke:0.2px #b4b4b4;">Kleurmodus</div>
<div class="t" style="left:576.35px;top:353.00px;font-size:9px;font-weight:400;color:#f2f2f2;transform:scaleX(0.9108);-webkit-text-stroke:0.2px #f2f2f2;">CMYK-kleur</div>
<div class="t" style="left:567.29px;top:375.00px;font-size:8px;font-weight:400;color:#b4b4b4;transform:scaleX(0.8898);-webkit-text-stroke:0.2px #b4b4b4;">Rastereffecten</div>
<div class="t" style="left:576.26px;top:393.00px;font-size:9px;font-weight:400;color:#f2f2f2;transform:scaleX(0.9669);-webkit-text-stroke:0.2px #f2f2f2;">Hoog (300 ppi)</div>
<div class="t" style="left:567.71px;top:415.00px;font-size:8px;font-weight:400;color:#b4b4b4;transform:scaleX(0.9348);-webkit-text-stroke:0.2px #b4b4b4;">Voorvertoningsmodus</div>
<div class="t" style="left:575.44px;top:433.00px;font-size:9px;font-weight:400;color:#f2f2f2;transform:scaleX(0.9471);-webkit-text-stroke:0.2px #f2f2f2;">Standaard</div>
<div class="t" style="left:649.53px;top:477.00px;font-size:8.6px;font-weight:700;color:#ececec;transform:scaleX(0.9510);-webkit-text-stroke:0.05px #ececec;">Sluiten</div>
<div class="t" style="left:708.15px;top:477.00px;font-size:8.6px;font-weight:700;color:#ffffff;transform:scaleX(1.0049);-webkit-text-stroke:0.05px #ffffff;">Maken</div>
</body></html>
